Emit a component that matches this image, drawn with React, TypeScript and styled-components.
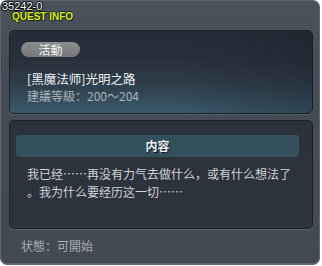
import styled, { createGlobalStyle } from "styled-components";

const GlobalStyle = createGlobalStyle`
  html, body {
    margin: 0;
    padding: 0;
    background: #ffffff;
  }
  body {
    font-family: "Noto Sans CJK SC", "Noto Sans", sans-serif;
  }
`;

const Window = styled.div`
  position: relative;
  box-sizing: border-box;
  width: 320px;
  height: 265px;
  display: flex;
  flex-direction: column;
  padding: 0 6px 0 8px;
  border: 1px solid #5d6670;
  border-radius: 7px;
  background: linear-gradient(to bottom, #4a525b 0%, #454c55 30%, #434a53 100%);
  box-shadow: inset 0 -1px 0 #59626c;
`;

const QuestId = styled.span`
  position: absolute;
  left: 1px;
  top: 0;
  font-family: "Liberation Sans", Arial, sans-serif;
  font-size: 11px;
  line-height: 11px;
  color: #ffffff;
  text-shadow: 1px 0 0 #000, -1px 0 0 #000, 0 1px 0 #000, 0 -1px 0 #000;
`;

const Heading = styled.div`
  height: 29px;
  padding: 11px 0 0 3px;
  box-sizing: border-box;
  font-family: "Liberation Sans", Arial, sans-serif;
  font-weight: bold;
  font-size: 10px;
  line-height: 10px;
  color: #d6f01e;
  text-shadow: 1px 1px 0 #1a1d10, -1px 0 0 #1a1d10, 0 -1px 0 #1a1d10;
`;

const Panel = styled.div<{ $tall?: boolean }>`
  box-sizing: border-box;
  width: 304px;
  height: ${(p) => (p.$tall ? "109px" : "84px")};
  border-radius: 5px;
  border: 1px solid #1c2027;
  box-shadow: 0 1px 0 #56606a;
`;

const InfoPanel = styled(Panel)`
  padding: 11px 0 0 11px;
  background:
    linear-gradient(to right, rgba(0, 0, 0, 0) 55%, rgba(25, 30, 40, 0.35) 100%),
    linear-gradient(to bottom, #262c37 0%, #28303b 35%, #2f3e4b 65%, #3b5a6a 100%);
`;

const ContentPanel = styled(Panel)`
  margin-top: 6px;
  padding: 14px 0 0 6px;
  background: linear-gradient(to bottom, #2c323c 0%, #2e343e 100%);
`;

const Tag = styled.div`
  width: 59px;
  height: 15px;
  border-radius: 8px;
  background: linear-gradient(to bottom, #8a8c8e 0%, #76787b 100%);
  color: #f4f4f4;
  font-size: 12px;
  line-height: 15px;
  text-align: center;
`;

const QuestTitle = styled.div`
  margin: 13px 0 0 6px;
  font-size: 12.5px;
  line-height: 17px;
  color: #f2f4f6;
`;

const Level = styled.div`
  margin: 1px 0 0 6px;
  font-size: 12px;
  line-height: 16px;
  color: #a9b4bc;
`;

const SectionBar = styled.div`
  width: 283px;
  height: 22px;
  border-radius: 3px;
  background: #34505c;
  color: #eef2f4;
  font-size: 12px;
  font-weight: bold;
  line-height: 22px;
  text-align: center;
  text-shadow: 1px 1px 0 #0d1418;
`;

const Body = styled.p`
  margin: 8px 0 0 11px;
  font-size: 12px;
  line-height: 18px;
  color: #cfd4d8;
`;

const Status = styled.div`
  margin: 9px 0 0 12px;
  font-size: 12px;
  line-height: 16px;
  color: #a6aeb6;
`;

export default function App() {
  return (
    <>
      <GlobalStyle />
      <Window>
        <QuestId>35242-0</QuestId>
        <Heading>QUEST INFO</Heading>
        <InfoPanel>
          <Tag>活動</Tag>
          <QuestTitle>[黑魔法师]光明之路</QuestTitle>
          <Level>建議等級：200～204</Level>
        </InfoPanel>
        <ContentPanel $tall>
          <SectionBar>内容</SectionBar>
          <Body>
            我已经……再没有力气去做什么，或有什么想法了
            <br />
            。我为什么要经历这一切……
          </Body>
        </ContentPanel>
        <Status>状態：可開始</Status>
      </Window>
    </>
  );
}
